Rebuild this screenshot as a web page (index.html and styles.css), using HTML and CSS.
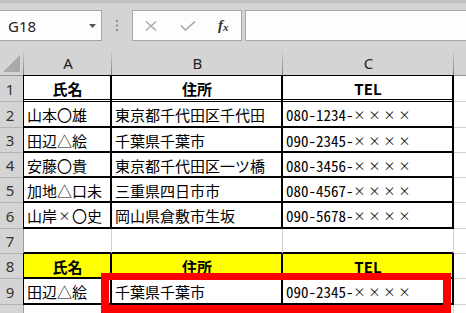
FILE: index.html
```html
<!DOCTYPE html>
<html lang="ja">
<head>
<meta charset="utf-8">
<link rel="stylesheet" href="styles.css">
</head>
<body>
<div class="app">
  <div class="topstrip"></div>
  <div class="fbar">
    <div class="namebox">
      <span>G18</span>
      <svg class="dd" width="7" height="4" viewBox="0 0 7 4"><polygon points="0,0 7,0 3.5,4" fill="#5b4b5b"/></svg>
    </div>
    <div class="sep">
      <svg width="2" height="11" viewBox="0 0 2 11"><rect x="0" y="0" width="2" height="2" fill="#8c8c8c"/><rect x="0" y="4.5" width="2" height="2" fill="#8c8c8c"/><rect x="0" y="9" width="2" height="2" fill="#8c8c8c"/></svg>
    </div>
    <div class="btns">
      <svg class="ic-x" width="12" height="10" viewBox="0 0 12 10"><path d="M1 0.5 L11 9.5 M11 0.5 L1 9.5" stroke="#a6a6a6" stroke-width="1.4" fill="none"/></svg>
      <svg class="ic-ok" width="16" height="10" viewBox="0 0 16 10"><path d="M1 4.5 L5.5 9 L15 0.5" stroke="#a6a6a6" stroke-width="1.6" fill="none"/></svg>
      <span class="fx"><i>f</i><i class="sx">x</i></span>
    </div>
    <div class="input"></div>
  </div>
  <div class="colheads">
    <div class="ch corner"><svg width="24" height="24" viewBox="0 0 24 24"><polygon points="3,21 20,21 20,4" fill="#a9a9a9"/></svg></div>
    <div class="ch w-a">A</div>
    <div class="ch w-b">B</div>
    <div class="ch w-c">C</div>
    <div class="ch w-d"></div>
  </div>
  <div class="sheet">
    <div class="rh">1</div>
    <div class="c r1 hd">氏名</div>
    <div class="c r1 hd">住所</div>
    <div class="c r1 hd">TEL</div>
    <div class="c"></div>

    <div class="rh">2</div>
    <div class="c b">山本〇雄</div>
    <div class="c b">東京都千代田区千代田</div>
    <div class="c b"><span class="num">080-1234-</span><span class="xx">××××</span></div>
    <div class="c"></div>

    <div class="rh">3</div>
    <div class="c b">田辺△絵</div>
    <div class="c b">千葉県千葉市</div>
    <div class="c b"><span class="num">090-2345-</span><span class="xx">××××</span></div>
    <div class="c"></div>

    <div class="rh">4</div>
    <div class="c b">安藤〇貴</div>
    <div class="c b">東京都千代田区一ツ橋</div>
    <div class="c b"><span class="num">080-3456-</span><span class="xx">××××</span></div>
    <div class="c"></div>

    <div class="rh">5</div>
    <div class="c b">加地△口未</div>
    <div class="c b">三重県四日市市</div>
    <div class="c b"><span class="num">080-4567-</span><span class="xx">××××</span></div>
    <div class="c"></div>

    <div class="rh">6</div>
    <div class="c b">山岸<span class="xs">×</span>〇史</div>
    <div class="c b">岡山県倉敷市生坂</div>
    <div class="c b"><span class="num">090-5678-</span><span class="xx">××××</span></div>
    <div class="c"></div>

    <div class="rh">7</div>
    <div class="c bb"></div>
    <div class="c bb"></div>
    <div class="c bb"></div>
    <div class="c"></div>

    <div class="rh">8</div>
    <div class="c b yel hd">氏名</div>
    <div class="c b yel hd">住所</div>
    <div class="c b yel hd">TEL</div>
    <div class="c"></div>

    <div class="rh">9</div>
    <div class="c b">田辺△絵</div>
    <div class="c b">千葉県千葉市</div>
    <div class="c b"><span class="num">090-2345-</span><span class="xx">××××</span></div>
    <div class="c"></div>

    <div class="rh"></div>
    <div class="c"></div>
    <div class="c"></div>
    <div class="c"></div>
    <div class="c"></div>
  </div>
  <div class="hl"></div>
</div>
</body>
</html>
```
FILE: styles.css
```css
* { box-sizing: border-box; margin: 0; padding: 0; }
html, body { width: 466px; height: 313px; overflow: hidden; background: #d4d4d4; }
body { font-family: "Noto Sans", "Liberation Sans", sans-serif; }
.app { position: relative; width: 466px; height: 313px; overflow: hidden; }

.topstrip { height: 3px; background: #c2c2c2; }

.fbar { display: flex; height: 31px; margin-top: 7px; }
.namebox {
  width: 102px; background: #fdfdfd; border: 1px solid #a6a6a6; border-left: none;
  display: flex; align-items: center; justify-content: space-between;
  padding: 0 5px 0 8px; font-size: 15px; color: #222;
}
.namebox span { line-height: 1; margin-top: 1px; }
.sep { width: 30px; display: flex; align-items: center; justify-content: center; padding-bottom: 1px; }
.btns {
  width: 110px; background: #fdfdfd; border: 1px solid #a6a6a6;
  display: flex; align-items: center; padding-left: 12px;
}
.ic-ok { margin-left: 23px; margin-top: 1px; }
.fx { margin-left: 22px; font-family: "Liberation Serif", serif; color: #333; line-height: 1; display: flex; align-items: flex-end; }
.fx i { font-size: 15px; font-weight: bold; }
.fx .sx { font-size: 11px; }
.input { flex: 1; margin-left: 3px; background: #fdfdfd; border: 1px solid #a6a6a6; border-right: none; }

.colheads { display: flex; height: 25px; margin-top: 10px; border-bottom: 1px solid #959595; }
.ch {
  display: flex; align-items: center; justify-content: center;
  font-size: 15px; color: #222;
  background-image: linear-gradient(to bottom, #cfcfcf, #7c7c7c);
  background-size: 1px 100%; background-position: right top; background-repeat: no-repeat;
}
.corner { width: 24px; display: block; }
.corner svg { display: block; }
.w-a { width: 88px; }
.w-b { width: 171px; }
.w-c { width: 171px; }
.w-d { flex: 1; background-image: none; }

.sheet {
  display: grid;
  grid-template-columns: 23px 87px 170px 170px 1fr;
  grid-template-rows: 25px 25px 24px 24px 24px 25px 24px 24px 25px 25px;
  gap: 1px; background: #d0d0d0;
}
.rh {
  background: #d4d4d4; font-size: 15px; color: #333;
  display: flex; align-items: center; justify-content: center; padding-right: 3px;
  box-shadow: 0 1px 0 #b3b3b3, 1px 0 0 #9c9c9c;
}
.c {
  background: #fff; color: #000;
  font-family: "Noto Sans CJK JP", sans-serif; font-size: 15px; line-height: 1;
  display: flex; align-items: center; padding-left: 3px;
  white-space: nowrap; overflow: hidden;
}
.b { box-shadow: 0 0 0 1px #000, inset -1px -1px 0 #000; }
.bb { box-shadow: inset 0 -1px 0 #000; }
.r1 {
  box-shadow: 0 0 0 1px #000, inset -1px 0 0 #000;
  background: linear-gradient(to bottom, #fff 0 23px, #000 23px 24px, #fff 24px);
}
.hd { font-weight: bold; justify-content: center; padding-left: 0; }
.yel { background: #ffff00; }
.num { font-feature-settings: "hwid"; }
.xx, .xs {
  font-feature-settings: "fwid"; font-size: 12px; letter-spacing: 3px;
  padding-top: 1px; color: #111;
}
.xs { letter-spacing: 0; padding: 1px 1.5px 0; }

.hl {
  position: absolute; left: 101px; top: 273px; width: 350px; height: 40px;
  border: 8px solid #ff0000; border-top-width: 7px;
}
```
